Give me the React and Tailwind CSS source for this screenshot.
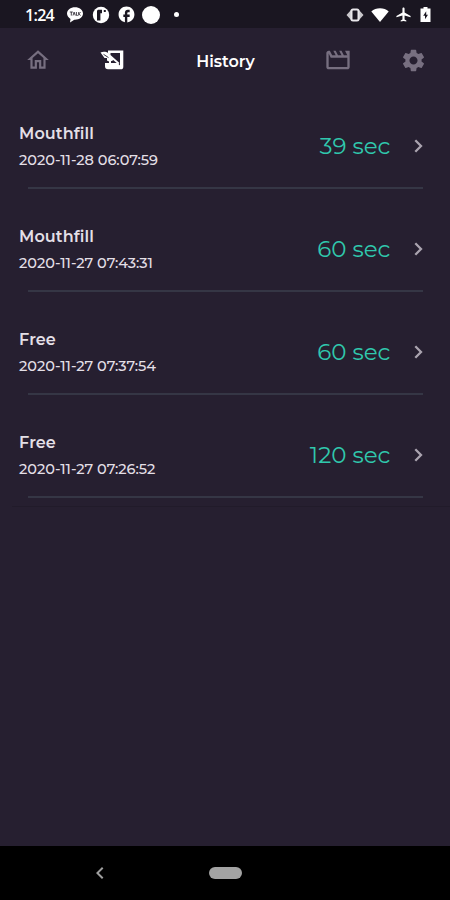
import React from "react";
import {
  MdOutlineHome,
  MdOutlineMovieCreation,
  MdSettings,
  MdChevronLeft,
  MdFacebook,
  MdAirplanemodeActive,
} from "react-icons/md";

const sessions = [
  { name: "Mouthfill", date: "2020-11-28 06:07:59", time: "39 sec" },
  { name: "Mouthfill", date: "2020-11-27 07:43:31", time: "60 sec" },
  { name: "Free", date: "2020-11-27 07:37:54", time: "60 sec" },
  { name: "Free", date: "2020-11-27 07:26:52", time: "120 sec" },
];

function StatusBar() {
  return (
    <div className="flex h-7 items-center justify-between bg-[#1a1621] pl-[25px] pr-[19px] pt-[1px] text-white">
      <div className="flex items-center">
        <span className="w-[41px] font-['Open_Sans',sans-serif] text-[16px] font-semibold leading-none tracking-[-0.7px]">1:24</span>
        <svg className="h-[18px] w-[18px]" viewBox="0 0 18 18" fill="currentColor">
          <path d="M9 1.3C4.6 1.3 1 4 1 7.6c0 2.2 1.4 4.1 3.5 5.3L4 16.4l4.3-2.6c4.8.3 8.7-2.5 8.7-6.2 0-3.6-3.6-6.3-8-6.3z" />
          <path d="M3.8 6h3M5.3 6v3.6M7 9.5l1.1-3.4 1.2 3.4M10.4 6v3.4h1.4M12.7 6v3.5M14.6 6l-1.7 1.8 1.8 1.7" stroke="#1a1621" strokeWidth=".8" fill="none" />
        </svg>
        <svg className="ml-[8px] h-[18px] w-[18px]" viewBox="0 0 18 18">
          <circle cx="9" cy="9" r="8.2" fill="white" />
          <path d="M5 14.5V5.3C5 4.3 5.700 3.800 6.600 3.800H10v3.400H8.400v7.300zM11.800 4h2v2h-2z" fill="#1a1621" />
        </svg>
        <MdFacebook className="ml-[7px] h-[19px] w-[19px]" />
        <div className="ml-[6px] h-[18px] w-[18px] rounded-full bg-white" />
        <div className="ml-[14px] h-[5px] w-[5px] rounded-full bg-white" />
      </div>
      <div className="flex items-center">
        <svg className="h-[16px] w-[18px]" viewBox="0 0 18 16">
          <path d="M5 3 .5 8 5 13zM13 3l4.500 5-4.500 5z" fill="#c9c7cc" />
          <rect x="5.500" y="2.500" width="7" height="11" rx="1.500" fill="none" stroke="#e8e6ea" strokeWidth="2" />
        </svg>
        <svg className="ml-[7px] h-[16px] w-[18px]" viewBox="0 0 18 16" fill="white">
          <path d="M9 15 .3 4.500C2.700 2.300 5.700 1.300 9 1.300s6.300 1 8.700 3.200z" />
        </svg>
        <MdAirplanemodeActive className="ml-[6px] h-[17px] w-[17px]" />
        <svg className="ml-[8px] h-[17px] w-[11px]" viewBox="0 0 11 17">
          <path d="M3.500 1h4v1.500H10.500V16H.5V2.500h3z" fill="white" />
          <path d="M6.200 5.300 3.200 9.800H5v3.500l3-4.600H6.200z" fill="#1a1621" />
        </svg>
      </div>
    </div>
  );
}

function HistoryIcon() {
  return (
    <svg className="mr-[2px] h-[20px] w-[24px]" viewBox="0 0 24 20" fill="white">
      <path d="M8 .5h15.300v16.200q0 2.600-2.600 2.600H8q-3 0-3-3V13h4V9l2 1.500V13h6.500l2.500 2.500V3H10.500v2L8 3.500z" />
      <path d="M.5 2.500C3 1.400 6 1.500 8.500 3.200L19.500 13l-1.300 1.300-5-4.300C11 12 8.500 11.500 7 10.500V8H4.500z" />
      <path d="M3.500 4.300 8.500 7.600" stroke="#261f30" strokeWidth=".9" />
    </svg>
  );
}

function TopTabs() {
  return (
    <div className="grid h-16 grid-cols-[75px_75px_150px_75px_75px] items-center justify-items-center text-[#776f80]">
      <MdOutlineHome className="h-[26px] w-[26px]" />
      <HistoryIcon />
      <h1 className="pl-px pt-[3px] text-[16px] font-semibold leading-none text-white">History</h1>
      <MdOutlineMovieCreation className="h-[28px] w-[28px]" />
      <MdSettings className="ml-px h-[27px] w-[27px]" />
    </div>
  );
}

function SessionRow({ item }) {
  return (
    <li className="flex h-[103px] flex-col">
      <div className="flex flex-1 items-center justify-between pl-[19px] pr-[27px] pt-[18px]">
        <div className="flex flex-col gap-[10px] whitespace-nowrap pt-[3px] text-[#e3dfe6]">
          <span className="text-[16px] font-semibold leading-4 tracking-[0.1px]">{item.name}</span>
          <span className="text-[14.5px] font-medium leading-4 tracking-[-0.02px]">{item.date}</span>
        </div>
        <div className="flex items-center">
          <span className="pt-[2px] text-[23px] leading-none text-[#30c8ad]">{item.time}</span>
          <svg className="ml-[23.500px] h-[14px] w-[9px]" viewBox="0 0 9 14" fill="none" stroke="#aaa3af" strokeWidth="2.300">
            <path d="M1.300 1.300 7 7l-5.700 5.700" />
          </svg>
        </div>
      </div>
      <div className="ml-[28px] mr-[27px] h-[2px] bg-[#353645]" />
    </li>
  );
}

export default function App() {
  return (
    <div className="flex h-[900px] w-[450px] flex-col overflow-hidden bg-[#261f30] font-['Montserrat','Inter',sans-serif]">
      <StatusBar />
      <TopTabs />
      <main className="flex-1">
        <ul className="-mt-[6px]">
          {sessions.map((item) => (
            <SessionRow key={item.date} item={item} />
          ))}
        </ul>
        <div className="ml-3 mt-[8px] h-px bg-[#211b2a]" />
      </main>
      <nav className="flex h-[54px] items-center bg-black text-[#9e9e9e]">
        <MdChevronLeft className="ml-[88px] h-[24px] w-[24px]" />
        <div className="ml-[97px] h-[12px] w-[33px] rounded-full bg-[#a3a3a3]" />
      </nav>
    </div>
  );
}
